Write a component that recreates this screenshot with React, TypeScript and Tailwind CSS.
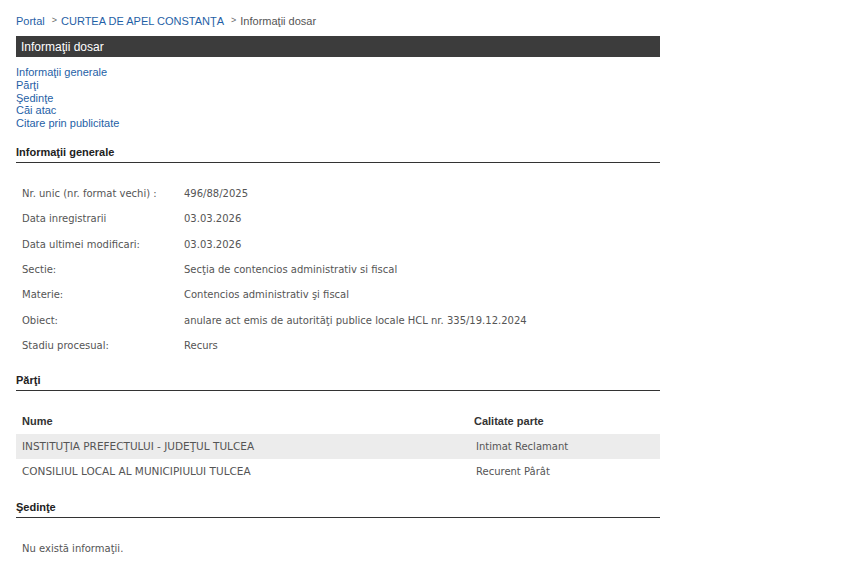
import React from "react";

const body = { fontFamily: '"DejaVu Sans", Verdana, sans-serif' };
const arial = { fontFamily: '"Liberation Sans", Arial, sans-serif' };

const info: [string, string][] = [
  ["Nr. unic (nr. format vechi) :", "496/88/2025"],
  ["Data inregistrarii", "03.03.2026"],
  ["Data ultimei modificari:", "03.03.2026"],
  ["Sectie:", "Secţia de contencios administrativ si fiscal"],
  ["Materie:", "Contencios administrativ şi fiscal"],
  ["Obiect:", "anulare act emis de autorităţi publice locale HCL nr. 335/19.12.2024"],
  ["Stadiu procesual:", "Recurs"],
];

const parti: [string, string][] = [
  ["INSTITUŢIA PREFECTULUI - JUDEŢUL TULCEA", "Intimat Reclamant"],
  ["CONSILIUL LOCAL AL MUNICIPIULUI TULCEA", "Recurent Pârât"],
];

function Heading({ children }: { children: React.ReactNode }) {
  return (
    <div
      className="box-border h-[21px] border-b border-[#333] text-[11px] font-bold text-[#222] flex items-center"
      style={arial}
    >
      {children}
    </div>
  );
}

export default function App() {
  return (
    <div className="w-[855px] h-[570px] bg-white overflow-hidden">
      <div className="w-[644px] ml-4 pt-[13px]">
        <div className="h-[16px] flex items-center text-[11px] text-[#555]" style={arial}>
          <span className="text-[#1f5fa6]">Portal</span>
          <span className="ml-[7px] text-[9px] text-[#666]">&gt;</span>
          <span className="ml-[4px] text-[#1f5fa6]">CURTEA DE APEL CONSTANŢA</span>
          <span className="ml-[7px] text-[9px] text-[#666]">&gt;</span>
          <span className="ml-[4px] text-[#555]">Informaţii dosar</span>
        </div>
        <div
          className="mt-[7px] h-[21px] bg-[#3c3c3c] text-white text-[12px] flex items-center pl-[5px]"
          style={arial}
        >
          Informaţii dosar
        </div>
        <div
          className="mt-[9px] flex flex-col text-[11px] leading-[12.75px] text-[#1f5fa6]"
          style={arial}
        >
          <span>Informaţii generale</span>
          <span>Părţi</span>
          <span>Şedinţe</span>
          <span>Căi atac</span>
          <span>Citare prin publicitate</span>
        </div>
        <div className="mt-[12px]">
          <Heading>Informaţii generale</Heading>
        </div>
        <div className="mt-[18px] flex flex-col text-[10px] text-[#555]" style={body}>
          {info.map(([k, v]) => (
            <div key={k} className="flex h-[25.33px] items-center">
              <div className="w-[168px] pl-[6px]">{k}</div>
              <div>{v}</div>
            </div>
          ))}
        </div>
        <div className="mt-[12px]">
          <Heading>Părţi</Heading>
        </div>
        <div className="mt-[18px] text-[10px] text-[#555]" style={body}>
          <div className="flex h-[25px] items-center font-bold text-[11px] text-[#333]" style={arial}>
            <div className="w-[458px] pl-[6px]">Nume</div>
            <div>Calitate parte</div>
          </div>
          {parti.map(([n, c], i) => (
            <div
              key={n}
              className={i === 0 ? "flex h-[25px] items-center bg-[#ececec]" : "flex h-[25px] items-center"}
            >
              <div className="w-[458px] pl-[6px] text-[10.5px]">{n}</div>
              <div className="pl-[2px]">{c}</div>
            </div>
          ))}
        </div>
        <div className="mt-[13px]">
          <Heading>Şedinţe</Heading>
        </div>
        <div className="mt-[23px] h-[14px] flex items-center text-[10px] text-[#555] pl-[6px]" style={body}>
          Nu există informaţii.
        </div>
      </div>
    </div>
  );
}
